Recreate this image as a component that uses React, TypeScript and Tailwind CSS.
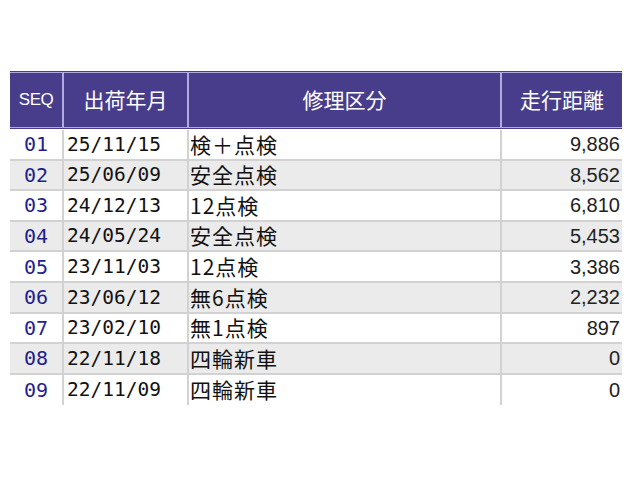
const rows = [
  { seq: '01', date: '25/11/15', kind: '検＋点検', km: '9,886' },
  { seq: '02', date: '25/06/09', kind: '安全点検', km: '8,562' },
  { seq: '03', date: '24/12/13', kind: '12点検', km: '6,810' },
  { seq: '04', date: '24/05/24', kind: '安全点検', km: '5,453' },
  { seq: '05', date: '23/11/03', kind: '12点検', km: '3,386' },
  { seq: '06', date: '23/06/12', kind: '無6点検', km: '2,232' },
  { seq: '07', date: '23/02/10', kind: '無1点検', km: '897' },
  { seq: '08', date: '22/11/18', kind: '四輪新車', km: '0' },
  { seq: '09', date: '22/11/09', kind: '四輪新車', km: '0' },
]

const jp = "font-['Noto_Sans_CJK_JP',sans-serif]"
const mono = "font-['DejaVu_Sans_Mono','Noto_Sans_CJK_JP',monospace]"

export default function App() {
  return (
    <div className="w-[640px] h-[480px] bg-white pt-[71px] pl-[10px]">
      <div className="w-[612px]">
        {/* header */}
        <div className="flex h-[58px] bg-[#483d8b] py-px text-white">
          <div className="w-[52px] flex items-center justify-center border-y border-[#b1a9e0] text-[17px] tracking-[-0.5px] font-['Liberation_Sans',sans-serif]">
            SEQ
          </div>
          <div className={`w-[125px] flex items-center justify-center border-y border-l-2 border-[#b1a9e0] text-[21px] ${jp}`}>
            出荷年月
          </div>
          <div className={`w-[313px] flex items-center justify-center border-y border-l-2 border-[#b1a9e0] text-[21px] ${jp}`}>
            修理区分
          </div>
          <div className={`w-[122px] flex items-center justify-center border-y border-l-2 border-[#b1a9e0] text-[21px] ${jp}`}>
            走行距離
          </div>
        </div>

        {/* body */}
        <div className="pt-px">
          {rows.map((r, i) => (
            <div
              key={r.seq}
              className={`flex h-[30.6px] ${i < rows.length - 1 ? 'border-b-2' : ''} border-[#d2d2d2] ${i % 2 === 1 ? 'bg-[#ebebeb]' : 'bg-white'}`}
            >
              <div className={`w-[52px] flex items-center justify-center text-[#1f1f8f] text-[20px] ${mono}`}>
                {r.seq}
              </div>
              <div className={`w-[125px] flex items-center pl-[3px] border-l-2 border-[#d2d2d2] text-[#111] text-[19.5px] ${mono}`}>
                {r.date}
              </div>
              <div className={`w-[313px] flex items-center pl-[1px] border-l-2 border-[#d2d2d2] text-[#111] text-[21px] tracking-[1px] ${jp}`}>
                {r.kind}
              </div>
              <div className="w-[122px] flex items-center justify-end pr-[2px] border-l-2 border-[#d2d2d2] text-[#222] text-[20px] font-['Liberation_Sans',sans-serif]">
                {r.km}
              </div>
            </div>
          ))}
        </div>
      </div>
    </div>
  )
}
